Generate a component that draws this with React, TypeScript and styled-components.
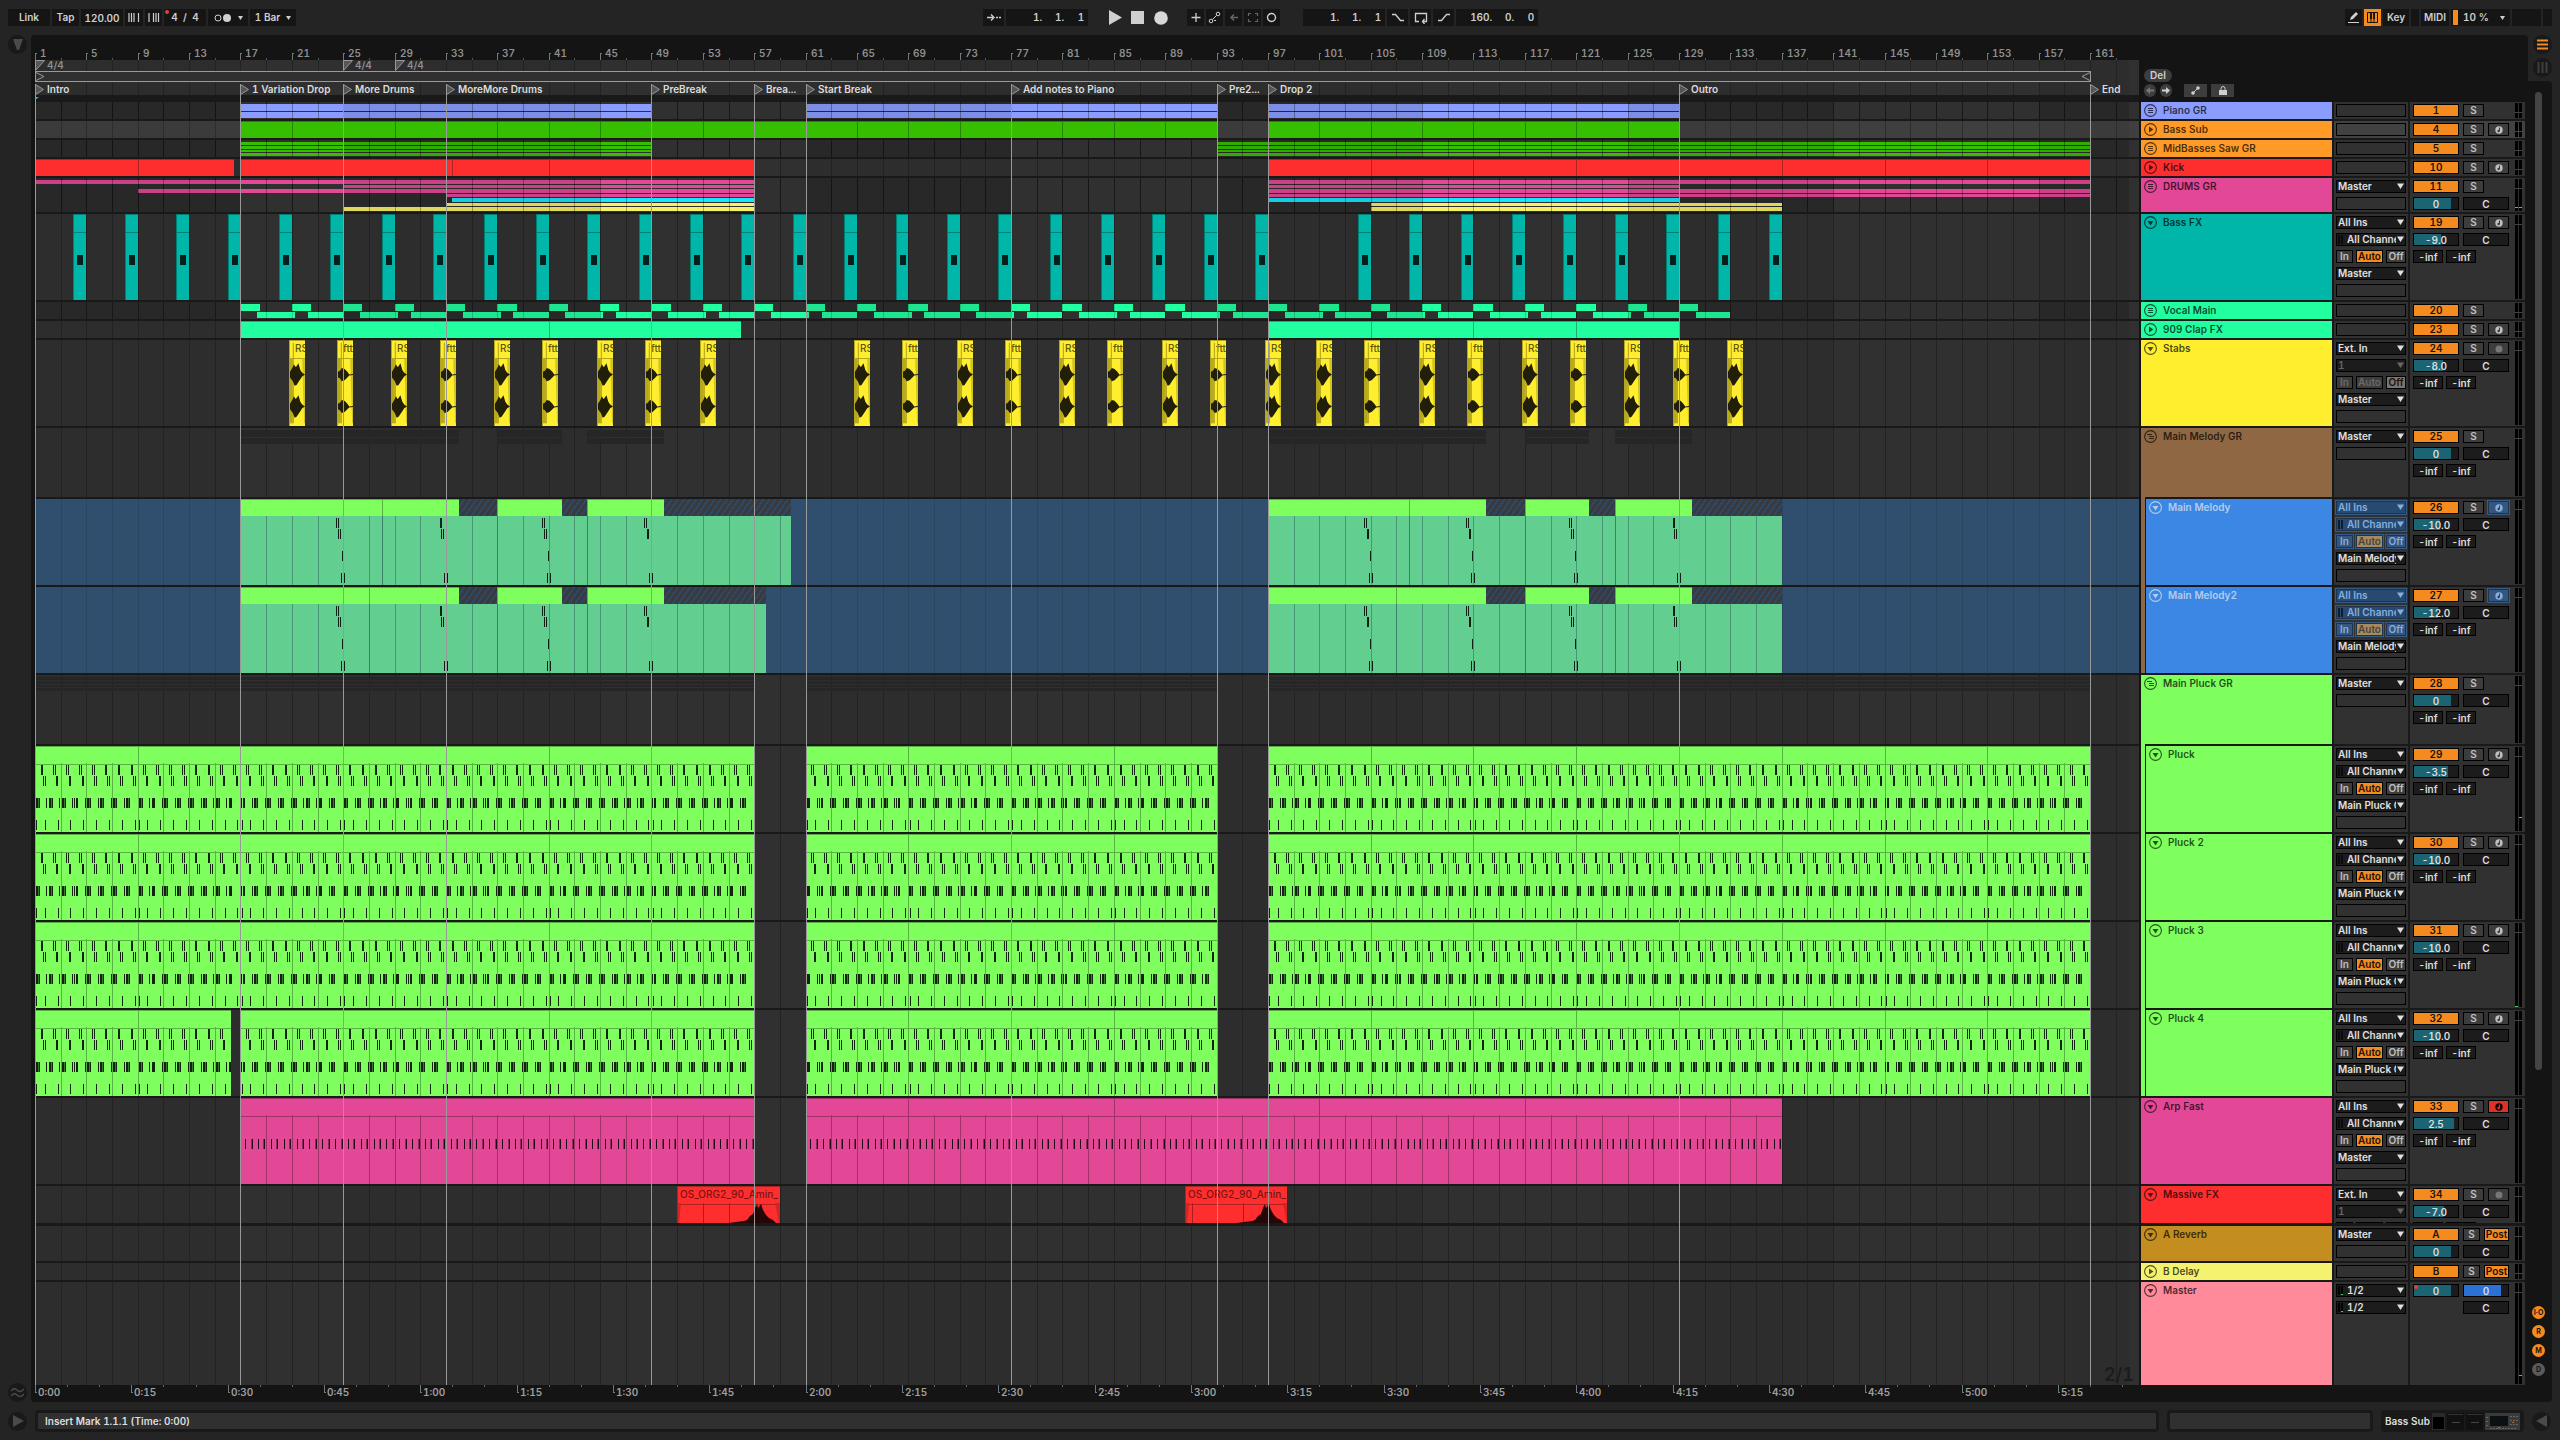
import React, { createContext, useContext, useLayoutEffect, useRef, useState } from "react";
import styled, { createGlobalStyle, css } from "styled-components";

/* ---------- theme values ---------- */
const C = {
  app: "#242424",
  panel: "#141414",
  gap: "#191919",
  field: "#151515",
  lane: "#303030",
  laneAlt: "#2d2d2d",
  text: "#cfcfcf",
  dim: "#8f8f8f",
  orange: "#f58a1f",
  teal: "#1a6473",
  green: "#7eff5e",
  pink: "#e24896",
  aqua: "#22ffa0",
};
const FONT = `Inter, "Liberation Sans", sans-serif`;

const Global = createGlobalStyle`
  * { box-sizing: border-box; }
  body {
    margin: 0;
    background: ${C.app};
    color: ${C.text};
    font: 600 10px/13px ${FONT};
    font-variant-numeric: tabular-nums;
  }
  button, input, select { font: inherit; font-variant-numeric: inherit; color: inherit; margin: 0; padding: 0; border: 0; border-radius: 0; outline: 0; }
  svg { display: block; }
`;

/* ---------- time scale ---------- */
const BARS = 163.81;
const Scale = createContext(12.844);
const useX = () => {
  const px = useContext(Scale);
  return (bar: number) => Math.floor((bar - 1) * px + 0.45);
};
const range = (from: number, to: number, step: number) => {
  const out: number[] = [];
  for (let b = from; b < to; b += step) out.push(b);
  return out;
};
type Span = [number, number];
const chop = (from: number, to: number, step: number): Span[] =>
  range(from, to, step).map((b) => [b, Math.min(b + step, to)]);

const DARK_BANDS: Span[] = [[1, 17], [25, 45], [61, 77], [93, 109], [125, 141], [157, 164]];

/* ---------- frame ---------- */
const App_ = styled.div`
  min-height: 100vh;
  display: flex;
  flex-direction: column;
  background: ${C.app};
`;
const Toolbar = styled.header`
  height: 35px;
  padding: 0 8px;
  display: flex;
  align-items: center;
`;
const ToolGroup = styled.div<{ $gap?: number; $before?: number }>`
  display: flex;
  align-items: center;
  gap: ${(p) => p.$gap ?? 2}px;
  margin-left: ${(p) => p.$before ?? 0}px;
`;
const Spacer = styled.div<{ $grow: number }>`
  flex: ${(p) => p.$grow} 0 0;
`;
const Tool = styled.button<{ $w: number; $on?: boolean; $off?: boolean }>`
  width: ${(p) => p.$w}px;
  height: 17px;
  display: flex;
  align-items: center;
  justify-content: center;
  gap: 6px;
  background: ${(p) => (p.$on ? C.orange : C.field)};
  color: ${(p) => (p.$off ? "#666" : p.$on ? "#151515" : C.text)};
  position: relative;
  white-space: pre;
`;
const RedDot = styled.i`
  position: absolute;
  left: 1px;
  top: 1px;
  width: 4px;
  height: 4px;
  border-radius: 50%;
  background: #e0402f;
`;
const TempoField = styled.input`
  width: 42px;
  height: 17px;
  background: ${C.field};
  text-align: center;
`;
const PositionBox = styled.div`
  width: 82px;
  height: 17px;
  padding-right: 4px;
  display: flex;
  justify-content: flex-end;
  background: ${C.field};
  input { width: 22px; background: none; text-align: right; }
  input:first-child { width: 30px; }
  input:last-child { width: 20px; }
`;
const Transport = styled.button`
  width: 23px;
  height: 17px;
  background: none;
  display: grid;
  place-items: center;
`;
const CpuBox = styled.label`
  height: 17px;
  width: 59px;
  display: flex;
  align-items: center;
  justify-content: space-between;
  padding: 1px 5px 1px 2px;
  background: ${C.field};
  i { width: 5px; height: 15px; background: ${C.orange}; }
  select { appearance: none; background: none; width: 32px; }
`;
const Body = styled.main`
  flex: 1;
  display: flex;
  padding-right: 8px;
`;
const LeftRail = styled.div`
  width: 31px;
  padding: 0 4px 0 8px;
  display: flex;
  flex-direction: column;
  justify-content: space-between;
`;
const Round = styled.button`
  width: 19px;
  height: 19px;
  flex: none;
  border-radius: 50%;
  background: #191919;
  display: grid;
  place-items: center;
`;
const Panel = styled.section`
  flex: 1;
  min-width: 0;
  display: flex;
  gap: 2px;
  padding: 0 3px 0 4px;
  background: ${C.panel};
  border-radius: 4px 4px 0 4px;
`;
const RightRail = styled.div`
  width: 24px;
  display: flex;
  flex-direction: column;
`;
const ViewSwitch = styled.div`
  height: 46px;
  padding-left: 5px;
  display: flex;
  flex-direction: column;
  gap: 4px;
`;
const ScrollColumn = styled.div`
  flex: 1;
  padding: 11px 3px 26px 0;
  background: ${C.panel};
  border-radius: 0 4px 4px 0;
  display: flex;
  flex-direction: column;
  align-items: center;
  gap: 6px;
`;
const ScrollTrack = styled.div`
  flex: 1;
  width: 7px;
`;
const ScrollThumb = styled.div`
  height: 81%;
  border-radius: 4px;
  background: #444;
`;
const Badge = styled.button<{ $off?: boolean }>`
  width: 13px;
  height: 13px;
  border-radius: 50%;
  background: ${(p) => (p.$off ? "#5a5a5a" : C.orange)};
  color: #151515;
  font-size: 7px;
  line-height: 13px;
  font-weight: 700;
  text-align: center;
`;

/* ---------- timeline ---------- */
const Timeline = styled.div`
  flex: 1;
  min-width: 0;
  position: relative;
  display: flex;
  flex-direction: column;
  overflow: hidden;
`;
const Strip = styled.div<{ $h: number; $bg?: string }>`
  height: ${(p) => p.$h}px;
  flex: none;
  position: relative;
  background: ${(p) => p.$bg ?? "transparent"};
`;
const Lanes = styled.div`
  flex: 1;
  display: flex;
  flex-direction: column;
  gap: 2px;
  background: ${C.gap};
`;
const LaneBox = styled.div<{ $h: number; $grow?: boolean; $space?: boolean; $tone?: string }>`
  position: relative;
  overflow: hidden;
  flex: ${(p) => (p.$grow ? 1 : 0)} 0 ${(p) => p.$h}px;
  margin-top: ${(p) => (p.$space ? 1 : 0)}px;
  background: ${(p) => (p.$tone === "selected" ? "#304e6e" : p.$tone === "focus" ? "#3f3f3f" : C.lane)};
`;
const Layer = styled.svg`
  position: absolute;
  inset: 0;
  width: 100%;
  height: 100%;
  pointer-events: none;
`;
const Block = styled.div<{ $color: string; $top: number; $h: number; $edge?: boolean }>`
  position: absolute;
  top: ${(p) => p.$top}px;
  height: ${(p) => p.$h}px;
  background: ${(p) => p.$color};
  overflow: hidden;
  ${(p) =>
    p.$edge &&
    css`
      border-left: 1px solid rgba(0, 0, 0, 0.3);
      &::before {
        content: "";
        position: absolute;
        inset: 0 0 auto 0;
        height: 17px;
        border-top: 1px solid rgba(0, 0, 0, 0.3);
        border-bottom: 1px solid rgba(0, 0, 0, 0.3);
      }
    `}
`;
const Hatch = styled.div`
  position: absolute;
  top: 0;
  height: 17px;
  background: repeating-linear-gradient(125deg, #3a3a3e 0 3px, #2e4763 3px 5px);
`;
const ClipName = styled.span<{ $inset: number; $color: string }>`
  position: absolute;
  left: ${(p) => p.$inset}px;
  top: 2px;
  color: ${(p) => p.$color};
  font-weight: 500;
  white-space: nowrap;
`;
const Mark = styled.span<{ $inset: number; $top: number; $color?: string }>`
  position: absolute;
  top: ${(p) => p.$top}px;
  padding-left: ${(p) => p.$inset}px;
  line-height: 13px;
  color: ${(p) => p.$color ?? C.dim};
  white-space: nowrap;
`;
const Flag = styled.svg`
  position: absolute;
`;
const CueLine = styled.i`
  position: absolute;
  top: 49px;
  bottom: 17px;
  width: 1px;
  background: #999;
`;
const LoopBrace = styled.div`
  position: absolute;
  top: 0;
  height: 11px;
  display: flex;
  justify-content: space-between;
  align-items: center;
  border: 1px solid #9a9a9a;
  background: #303030;
`;
const StartFlag = styled.i<{ $h: number }>`
  position: absolute;
  left: 0;
  top: 2px;
  border-top: 3px solid #31b9d6;
  border-right: ${(p) => p.$h}px solid transparent;
`;
const InsertLine = styled.i`
  position: absolute;
  left: 0;
  top: 0;
  bottom: 0;
  width: 1px;
  background: #31b9d6;
  z-index: 2;
`;
const GridSize = styled.span`
  position: absolute;
  right: 5px;
  bottom: 0;
  font-size: 18px;
  line-height: 20px;
  color: #1b1b1b;
`;

/* Vertical bar lines and the alternating shading of the arrangement. */
function Grid({ over, line, shade }: { over?: boolean; line?: string; shade?: string }) {
  const x = useX();
  return (
    <Layer shapeRendering="crispEdges">
      {DARK_BANDS.map(([a, b]) => (
        <rect key={a} x={x(a)} y={0} width={x(b) - x(a)} height="100%" fill={shade ?? (over ? "rgba(0,0,0,.1)" : C.laneAlt)} />
      ))}
      {range(3, 164, 2).map((b) => (
        <rect key={b} x={x(b)} y={0} width={1} height="100%" fill={line ?? (over ? "rgba(0,0,0,.3)" : "#222")} />
      ))}
    </Layer>
  );
}

function Blocks({ spans, color, top = 0, h, edge }: { spans: Span[]; color: string; top?: number; h: number; edge?: boolean }) {
  const x = useX();
  return (
    <>
      {spans.map(([a, b]) => (
        <Block key={a} $color={color} $top={top} $h={h} $edge={edge} style={{ left: x(a), width: x(b) - x(a) }} />
      ))}
    </>
  );
}

function BodyLines({ spans, h, color }: { spans: Span[]; h: number; color: string }) {
  const x = useX();
  return (
    <Layer shapeRendering="crispEdges">
      <path
        fill={color}
        d={spans.map(([a, b]) => range(a % 2 ? a + 2 : a + 1, b, 2).map((n) => `M${x(n)} 17h1v${h - 17}h-1z`).join("")).join("")}
      />
    </Layer>
  );
}

/* Thin overview strips shown in a folded group. */
const SUB2: Span[] = [[2, 7], [10, 6]];
const SUB4: Span[] = [[2, 3], [6, 3], [10, 2], [13, 3]];
function Overview({ rows, spans, color }: { rows: Span[]; spans: Span[]; color: string }) {
  return (
    <>
      {rows.map(([top, h]) => (
        <Blocks key={top} spans={spans} color={color} top={top} h={h} />
      ))}
    </>
  );
}

function DrumsLane() {
  const y = "#f7f06a";
  const rows: [number, number, string, Span[]][] = [
    [2, 4, C.pink, [[1, 57], [97, 161]]],
    [7, 3, C.pink, [[25, 57], [97, 129]]],
    [11, 4, C.pink, [[9, 57], [97, 161]]],
    [16, 3, C.pink, [[33, 57], [97, 161]]],
    [20, 4, "#18e6fb", [[33.5, 57], [97, 129]]],
    [25, 3, y, [[33, 57], [105, 137]]],
    [29, 4, y, [[25, 57], [105, 137]]],
  ];
  return (
    <>
      {rows.map(([top, h, c, spans]) => (
        <Blocks key={top} top={top} h={h} color={c} spans={spans} />
      ))}
      <Grid over />
    </>
  );
}

function BassFxLane() {
  const x = useX();
  const bars = range(4, 137, 4).filter((b) => b !== 100);
  return (
    <>
      <Blocks spans={bars.map((b) => [b, b + 1] as Span)} color="#00b6a8" h={86} edge />
      <Layer shapeRendering="crispEdges">
        {bars.map((b) => (
          <rect key={b} x={x(b) + 4} y={41} width={6} height={10} fill="#061f1d" />
        ))}
      </Layer>
    </>
  );
}

function VocalLane() {
  const top = range(17, 131, 4).map((b) => [b, b + 1.5] as Span);
  const low = range(17, 131, 8).flatMap((b) => [[b + 1.3, b + 4.25], [b + 5.25, b + 8]] as Span[]).filter(([a]) => a < 131);
  const end = 133;
  return (
    <>
      <Blocks spans={top} color={C.aqua} top={2} h={7} />
      <Blocks spans={low.map(([a, b]) => [a, Math.min(b, end)] as Span)} color={C.aqua} top={10} h={6} />
      <Grid over line="rgba(0,0,0,.18)" />
    </>
  );
}

const RS = [20.75, 28.75, 36.75, 44.75, 52.75, 64.75, 72.75, 80.75, 88.75, 96.75, 100.75, 108.75, 116.75, 124.75, 132.75];
const FT = [24.5, 32.5, 40.5, 48.5, 68.5, 76.5, 84.5, 92.5, 104.5, 112.5, 120.5, 128.5];
const WAVE_RS = "M0 -3L3 -8L4 -11L6 -8L7 -9L9 -12L11 -5L13 -2L16 0L13 2L11 5L9 8L7 11L5 12L3 7L0 3Z";
const WAVE_FT = "M0 -3L2 -4L4 -7L7 -6L10 -3L12 0L16 -.5V.5L12 1L10 3L7 6L4 7L2 4L0 3Z";
function StabsLane() {
  const x = useX();
  const items = [...RS.map((b) => ({ b, n: "RS", w: WAVE_RS })), ...FT.map((b) => ({ b, n: "ftt", w: WAVE_FT }))];
  return (
    <>
      {items.map(({ b, n, w }) => (
        <Block key={b} $color="#ffee2e" $top={0} $h={86} $edge style={{ left: x(b), width: 16 }}>
          <ClipName $inset={5} $color="#5f5708">{n}</ClipName>
          <Layer viewBox="0 0 16 86">
            <path d="M0 17h3v69h-3z" fill="#b9a91a" />
            <path d="M13 17h3v69h-1z" fill="#d2c322" />
            <path d="M3 0h1v86h-1z" fill="#a89a18" />
            <path d={w} transform="translate(0 34)" fill="#211f0a" />
            <path d={w} transform="translate(0 68)" fill="#211f0a" />
          </Layer>
        </Block>
      ))}
    </>
  );
}

function MelodyLane({ split, end }: { split: number; end: number }) {
  const x = useX();
  const parts: { from: number; to: number }[] = [{ from: 17, to: end }, { from: 97, to: 137 }];
  const body = "#62cf90";
  const place = (a: number, b: number) => ({ left: x(a), width: x(b) - x(a) });
  const group = (c: number, i: number) => {
    const g = x(c);
    const thick = c === 33 || c === 129;
    const r = (dx: number, y: number, w = 1) => `M${g + dx} ${y}h${w}v10h${-w}z`;
    return (
      (thick ? r(-6, 19, 2) : r(-7, 19) + r(-5, 19)) +
      (c === 49 || c === 105 || c === 113 ? r(-4, 30, 2) : r(-5, 30) + r(-3, 30)) +
      (i === 0 || i === 2 || c === 113 ? r(-1, 52) : "") +
      r(-2, 74) + r(1, 74)
    );
  };
  return (
    <>
      {parts.map(({ from, to }) => {
        const s = from - 17;
        return (
          <React.Fragment key={from}>
            <Hatch style={place(from, to)} />
            <Block $color={body} $top={17} $h={69} style={place(from, to)} />
            <BodyLines spans={[[from, to]]} h={86} color="#479676" />
            <Layer shapeRendering="crispEdges">
              <path fill="#3c8266" d={[split, 37, 44].map((b) => `M${x(b + s)} 17h1v69h-1z`).join("")} />
              <path fill="#0e2016" d={[25, 33, 41, 49].map((c, i) => group(c + s, i)).join("")} />
            </Layer>
            <Blocks
              spans={([[17, split], [split, 34], [37, 42], [44, 50]] as Span[]).map(([a, b]) => [a + s, b + s] as Span)}
              color={C.green}
              h={17}
              edge
            />
          </React.Fragment>
        );
      })}
    </>
  );
}

/* Repeating pluck riff: four pitch rows, one cell per bar. */
function PluckLane({ cut }: { cut?: boolean }) {
  const x = useX();
  const px = useContext(Scale);
  const spans: Span[] = [...(cut ? ([[1, 16.26], [17, 57]] as Span[]) : ([[1, 57]] as Span[])), [61, 93], [97, 161]];
  const clips = spans.flatMap(([a, b]) => chop(a, b, 8));
  let dark = "";
  let mid = "";
  clips.forEach(([a, b]) => {
    const limit = x(b);
    range(a, b, 1).forEach((bar) => {
      const s = (bar - 1) * px + 0.33;
      const note = (f: number, y: number, w = 1) => {
        const n = Math.floor(s + f);
        return n + w <= limit && n >= 0 ? `M${n} ${y}h${w}v10h${-w}z` : "";
      };
      dark += note(px * 0.45, 19) + note(px * 0.575, 19) + note(px * 0.64, 30) + note(px * 0.765, 30);
      dark += (bar === a ? note(1.3, 74) : note(-1.2, 52)) + note(1.1, 52) + note(2.2, 52) + note(4, 52) + note(px * 0.77, 74);
      mid += note(3.1, 52);
    });
  });
  return (
    <>
      <Blocks spans={clips} color={C.green} h={86} edge />
      <BodyLines spans={spans} h={86} color="#58b442" />
      <Layer shapeRendering="crispEdges">
        <path d={mid} fill="#3b7a2c" />
        <path d={dark} fill="#12240d" />
      </Layer>
    </>
  );
}

function ArpLane() {
  const x = useX();
  const spans: Span[] = [[17, 57], [61, 137]];
  const clips: Span[] = [[17, 33], [33, 57], [61, 69], ...chop(69, 133, 16), [133, 137]];
  const notes = spans.flatMap(([a, b]) => range(a + 0.37, b, 0.5));
  return (
    <>
      <Blocks spans={clips} color={C.pink} h={86} edge />
      <BodyLines spans={spans} h={86} color="#a03369" />
      <Layer shapeRendering="crispEdges">
        <path fill="#8a2c5b" d={notes.filter((_, i) => i % 2).map((b) => `M${x(b) - 1} 41h1v10h-1z`).join("")} />
        <path fill="#230a17" d={notes.map((b) => `M${x(b)} 41h1v10h-1z`).join("")} />
      </Layer>
    </>
  );
}

function MassiveLane() {
  const x = useX();
  return (
    <>
      {[51, 90.5].map((b) => (
        <Block key={b} $color="#ff2e2e" $top={0} $h={37} $edge style={{ left: x(b), width: x(b + 8) - x(b) }}>
          <ClipName $inset={2} $color="#7a1212">OS_ORG2_90_Amin_</ClipName>
          <Layer>
            <path d="M0 17h3l-2 20h-1z M97 17h6v20h-2z" fill="#cf2626" />
            <path d={b === 51 ? "M25 17h1v20h-1z M51 17h1v20h-1z" : "M6 17h1v20h-1z M57 17h1v20h-1z"} fill="#a81e1e" />
            <path d="M51 37L58 36L66 35L69 34L72 30L75 28L77 22L79 18L80 22L83 18L85 24L88 29L91 32L95 34L98 37Z" fill="#260707" />
          </Layer>
        </Block>
      ))}
    </>
  );
}

/* ---------- track model ---------- */
type Track = {
  name: string;
  num: string;
  h: number;
  color: string;
  icon: "group" | "open" | "play" | "fold";
  kids?: string;
  io?: "all" | "ext" | "out" | "master" | "none";
  out?: string;
  vol?: [string, number];
  rec?: "midi" | "audio" | "armed";
  inf?: boolean;
  sel?: boolean;
  focus?: boolean;
  ret?: boolean;
  meter?: [number, number];
  lane?: React.ReactNode;
};

const FULL: Span[] = [[1, 57], [61, 93], [97, 161]];
const GHOST: Span[] = [[17, 34], [37, 42], [44, 50], [97, 114], [117, 122], [124, 130]];
const BROWN = "#8f6843";

const tracks: Track[] = [
  { name: "Piano GR", num: "1", h: 17, color: "#8a9dff", icon: "group",
    lane: <><Overview rows={SUB2} spans={[[17, 49], [61, 93], [97, 129]]} color="#8a9dff" /><Grid over /></> },
  { name: "Bass Sub", num: "4", h: 17, color: "#ff9a26", icon: "play", rec: "midi", focus: true,
    lane: <><InsertLine /><Blocks spans={[...chop(17, 93, 4), ...chop(97, 129, 4)]} color="#36bf00" h={17} edge /></> },
  { name: "MidBasses Saw GR", num: "5", h: 17, color: "#ff9a26", icon: "group",
    lane: <><Overview rows={SUB4} spans={[[17, 49], [93, 161]]} color="#36bf00" /><Grid over /></> },
  { name: "Kick", num: "10", h: 17, color: "#ff2e2e", icon: "play", rec: "midi",
    lane: <Blocks spans={[[1, 9], [9, 16.5], [17, 25], [25, 33.5], [33.5, 41], [41, 49], [49, 57], ...chop(97, 161, 8)]} color="#ff2e2e" h={17} edge /> },
  { name: "DRUMS GR", num: "11", h: 34, color: C.pink, icon: "group", io: "out", out: "Master", vol: ["0", 84], meter: [28, 28], lane: <DrumsLane /> },
  { name: "Bass FX", num: "19", h: 86, color: "#00b6a8", icon: "open", io: "all", out: "Master", vol: ["-9.0", 61], rec: "midi", inf: true, lane: <BassFxLane /> },
  { name: "Vocal Main", num: "20", h: 17, color: C.aqua, icon: "group", lane: <VocalLane /> },
  { name: "909 Clap FX", num: "23", h: 17, color: C.aqua, icon: "play", rec: "midi",
    lane: <Blocks spans={[...chop(17, 56, 8), ...chop(97, 129, 8)]} color={C.aqua} h={17} edge /> },
  { name: "Stabs", num: "24", h: 86, color: "#ffee2e", icon: "open", io: "ext", out: "Master", vol: ["-8.0", 66], rec: "audio", inf: true, lane: <StabsLane /> },
  { name: "Main Melody GR", num: "25", h: 69, color: BROWN, icon: "fold", io: "out", out: "Master", vol: ["0", 84], inf: true,
    lane: <Overview rows={SUB2} spans={GHOST} color="#262626" /> },
  { name: "Main Melody", num: "26", h: 86, color: "#3c87e4", icon: "open", kids: BROWN, io: "all", out: "Main Melody GR", vol: ["-10.0", 59], rec: "midi", inf: true, sel: true,
    lane: <MelodyLane split={28} end={59.9} /> },
  { name: "Main Melody2", num: "27", h: 86, color: "#3c87e4", icon: "open", kids: BROWN, io: "all", out: "Main Melody GR", vol: ["-12.0", 55], rec: "midi", inf: true, sel: true,
    lane: <MelodyLane split={27} end={57.9} /> },
  { name: "Main Pluck GR", num: "28", h: 69, color: C.green, icon: "fold", io: "out", out: "Master", vol: ["0", 84], inf: true,
    lane: <Overview rows={SUB4} spans={FULL} color="#262626" /> },
  ...["Pluck", "Pluck 2", "Pluck 3", "Pluck 4"].map((name, i): Track => ({
    name, num: String(29 + i), h: 86, color: C.green, icon: "open", kids: C.green, io: "all", out: "Main Pluck GR",
    vol: i ? ["-10.0", 59] : ["-3.5", 77], rec: "midi", inf: true,
    meter: i === 0 ? [0, 70] : i === 2 ? [83, 0] : undefined,
    lane: <PluckLane cut={i === 3} />,
  })),
  { name: "Arp Fast", num: "33", h: 86, color: C.pink, icon: "open", io: "all", out: "Master", vol: ["2.5", 91], rec: "armed", inf: true, lane: <ArpLane /> },
  { name: "Massive FX", num: "34", h: 37, color: "#ff2e2e", icon: "open", io: "ext", out: "Master", vol: ["-7.0", 68], rec: "audio", inf: true, lane: <MassiveLane /> },
  { name: "A Reverb", num: "A", h: 35, color: "#c48d20", icon: "open", io: "out", out: "Master", vol: ["0", 84], ret: true },
  { name: "B Delay", num: "B", h: 17, color: "#f5f270", icon: "play", ret: true },
  { name: "Master", num: "", h: 103, color: "#ff8a9a", icon: "open", io: "master", meter: [0, 92] },
];

/* ---------- rulers ---------- */
const CUES: [number, string][] = [
  [1, "Intro"], [17, "1 Variation Drop"], [25, "More Drums"], [33, "MoreMore Drums"], [49, "PreBreak"], [57, "Brea..."],
  [61, "Start Break"], [77, "Add notes to Piano"], [93, "Pre2..."], [97, "Drop 2"], [129, "Outro"], [161, "End"],
];

function BeatRuler() {
  const x = useX();
  return (
    <Strip $h={25}>
      <Layer shapeRendering="crispEdges">
        <path fill="#777" d={range(1, 162, 4).map((b) => `M${x(b)} 18h2v1h-1v6h-1z`).join("")} />
        <path fill="#555" d={range(3, 164, 4).map((b) => `M${x(b)} 23h1v2h-1z`).join("")} />
      </Layer>
      {range(1, 162, 4).map((b) => (
        <Mark key={b} $inset={5} $top={12} style={{ left: x(b) }}>{b}</Mark>
      ))}
    </Strip>
  );
}

function SignatureRow() {
  const x = useX();
  return (
    <Strip $h={11} $bg={C.lane}>
      <Grid />
      {[1, 25, 29].map((b) => (
        <React.Fragment key={b}>
          <Flag width="11" height="11" style={{ left: x(b), top: 0 }}>
            <path d="M.5 .5H9.500L.5 10.500Z" fill="#555" stroke="#999" />
          </Flag>
          <Mark $inset={12} $top={-1} style={{ left: x(b) }}>4/4</Mark>
        </React.Fragment>
      ))}
    </Strip>
  );
}

function LoopRow() {
  const x = useX();
  return (
    <Strip $h={11} $bg={C.lane}>
      <Grid />
      <LoopBrace style={{ left: x(1), width: x(161) - x(1) + 1 }}>
        <svg width="9" height="9"><path d="M0 .5L8 4.500L0 8.500" fill="none" stroke="#9a9a9a" /></svg>
        <svg width="9" height="9"><path d="M9 .5L1 4.500L9 8.500" fill="none" stroke="#9a9a9a" /></svg>
      </LoopBrace>
    </Strip>
  );
}

function CueRow() {
  const x = useX();
  return (
    <Strip $h={13} $bg={C.lane}>
      <Grid />
      {CUES.map(([b, name]) => (
        <React.Fragment key={b}>
          <Flag width="10" height="11" style={{ left: x(b), top: 2 }}>
            <path d="M.5 .5L8.500 5.500L.5 10.500Z" fill="#555" stroke="#999" />
          </Flag>
          <Mark $inset={12} $top={1} $color="#dcdcdc" style={{ left: x(b) }}>{name}</Mark>
        </React.Fragment>
      ))}
    </Strip>
  );
}

function TimeRuler() {
  const x = useX();
  const marks = range(0, 22, 1).map((i) => ({ bar: 1 + i * 7.5, label: `${Math.floor(i / 4)}:${String((i % 4) * 15).padStart(2, "0")}` }));
  return (
    <Strip $h={17} $bg={C.panel}>
      <Layer shapeRendering="crispEdges">
        <path fill="#777" d={marks.map((m) => `M${x(m.bar)} 0h1v7h1v1h-2z`).join("")} />
        <path fill="#666" d={marks.flatMap((m) => [2.5, 5].map((o) => `M${x(m.bar + o)} 0h1v2h-1z`)).join("")} />
      </Layer>
      {marks.map((m) => (
        <Mark key={m.label} $inset={3} $top={1} $color="#a0a0a0" style={{ left: x(m.bar) }}>{m.label}</Mark>
      ))}
    </Strip>
  );
}

function Cues() {
  const x = useX();
  return <>{CUES.map(([b]) => <CueLine key={b} style={{ left: x(b) }} />)}</>;
}

/* ---------- mixer side ---------- */
const Side = styled.aside`
  width: 384px;
  display: flex;
  flex-direction: column;
`;
const SideTop = styled.div`
  height: 67px;
  padding: 34px 0 5px 3px;
  display: flex;
  flex-direction: column;
  gap: 2px;
`;
const SideButtons = styled.div`
  display: flex;
  gap: 4px;
`;
const Pill = styled.button<{ $w: number; $square?: boolean; $gap?: number }>`
  width: ${(p) => p.$w}px;
  height: 13px;
  margin-left: ${(p) => p.$gap ?? 0}px;
  border-radius: ${(p) => (p.$square ? 0 : 7)}px;
  background: #3d3d3d;
  display: grid;
  place-items: center;
`;
const Rows = styled.div`
  flex: 1;
  display: flex;
  flex-direction: column;
  gap: 2px;
  background: ${C.gap};
`;
const Row = styled.div<{ $h: number; $grow?: boolean; $space?: boolean }>`
  display: flex;
  gap: 2px;
  flex: ${(p) => (p.$grow ? 1 : 0)} 0 ${(p) => p.$h}px;
  height: ${(p) => p.$h}px;
  margin-top: ${(p) => (p.$space ? 1 : 0)}px;
`;
const HeadCell = styled.div`
  width: 191px;
  display: flex;
  gap: 1px;
`;
const GroupStrip = styled.div<{ $color: string }>`
  width: 4px;
  margin-top: -2px;
  background: ${(p) => p.$color};
`;
const Head = styled.div<{ $color: string; $sel?: boolean }>`
  flex: 1;
  display: flex;
  align-items: flex-start;
  gap: 6px;
  padding: 2px 3px;
  background: ${(p) => p.$color};
  color: ${(p) => (p.$sel ? "#b4cdec" : "rgba(0,0,0,.72)")};
  button { background: none; width: 13px; height: 13px; }
`;
const IoCell = styled.div<{ $focus?: boolean }>`
  width: 74px;
  overflow: hidden;
  display: flex;
  flex-direction: column;
  gap: 4px;
  padding: 2px;
  background: ${(p) => (p.$focus ? "#414141" : "#313131")};
`;
const MixCell = styled(IoCell)`
  width: 115px;
  flex-direction: row;
  justify-content: space-between;
  padding: 1px 3px;
`;
const MixControls = styled.div`
  display: flex;
  flex-direction: column;
  gap: 4px;
  padding-top: 1px;
`;
const Line = styled.div<{ $gap?: number; $end?: boolean }>`
  display: flex;
  flex: none;
  gap: ${(p) => p.$gap ?? 4}px;
  justify-content: ${(p) => (p.$end ? "flex-end" : "flex-start")};
`;
const boxed = css`
  height: 13px;
  flex: none;
  border: 1px solid #000;
  line-height: 11px;
  text-align: center;
`;
const selectedTone = css`
  background: #284a70;
  color: #86aede;
  border-color: #1c3450;
  box-shadow: 0 0 0 1px #355a84;
`;
const SelectWrap = styled.label<{ $off?: boolean; $sel?: boolean; $inset?: boolean }>`
  ${boxed}
  display: block;
  width: 70px;
  position: relative;
  background: #1c1c1c;
  color: ${(p) => (p.$off ? "#666" : "#e0e0e0")};
  ${(p) => p.$sel && selectedTone}
  select {
    appearance: none;
    display: block;
    width: 100%;
    height: 11px;
    padding: 0 9px 0 ${(p) => (p.$inset ? 10 : 1)}px;
    background: none;
    line-height: 11px;
    overflow: hidden;
    opacity: 1;
  }
  svg { position: absolute; right: 1px; top: 2px; pointer-events: none; }
`;
const MiniMeter = styled.i<{ $lit?: boolean }>`
  position: absolute;
  left: 1px;
  top: 1px;
  width: 5px;
  height: 9px;
  border-left: 2px solid #000;
  border-right: 2px solid #000;
  opacity: ${(p) => (p.$lit ? 1 : 0.6)};
  &::after {
    content: "";
    position: absolute;
    right: -2px;
    bottom: 0;
    width: 2px;
    height: 1px;
    background: ${(p) => (p.$lit ? "#2be04a" : "#000")};
  }
`;
const EmptyBox = styled.div`
  ${boxed}
  width: 70px;
`;
const Toggle = styled.button<{ $w: number; $on?: boolean; $off?: boolean; $sel?: boolean; $grey?: boolean }>`
  ${boxed}
  width: ${(p) => p.$w}px;
  background: ${(p) => (p.$on ? C.orange : p.$grey ? "#777" : "#3d3d3d")};
  color: ${(p) => (p.$on || p.$grey ? "#1a1208" : p.$off ? "#6a6a6a" : "#c0c0c0")};
  display: flex;
  align-items: center;
  justify-content: center;
  white-space: nowrap;
  ${(p) => p.$sel && selectedTone}
  ${(p) => p.$sel && p.$on && css`background: #a38a63; color: #4c4433;`}
  ${(p) => p.$sel && !p.$on && css`background: #35577f;`}
`;
const Arm = styled(Toggle)<{ $armed?: boolean }>`
  ${(p) => p.$armed && css`background: #e03127;`}
`;
const Value = styled.input<{ $w: number; $fill?: number; $blue?: boolean }>`
  && {
    ${boxed}
    width: ${(p) => p.$w}px;
    color: #dcdcdc;
    background: linear-gradient(to right, ${(p) => (p.$blue ? "#2a72d6" : C.teal)} ${(p) => p.$fill ?? 0}%, #1c1c1c ${(p) => p.$fill ?? 0}%);
  }
`;
const VolumeSlot = styled.div`
  position: relative;
  display: flex;
`;
const Meters = styled.div`
  display: flex;
  gap: 1px;
  position: relative;
  &::after {
    content: "";
    position: absolute;
    left: 0;
    right: 0;
    top: 9px;
    height: 1px;
    background: #444;
  }
`;
const Meter = styled.div<{ $at?: number }>`
  width: 3px;
  background: #000;
  ${(p) => !!p.$at && css`
    background: linear-gradient(#000 ${p.$at}px, #2be04a ${p.$at}px ${p.$at! + 1}px, #000 ${p.$at! + 1}px);
  `}
`;

function HeadIcon({ kind, light }: { kind: Track["icon"]; light?: boolean }) {
  const c = light ? "#b4cdec" : "rgba(0,0,0,.68)";
  return (
    <svg width="13" height="13" viewBox="0 0 13 13" fill="none" stroke={c}>
      <circle cx="6.5" cy="6.5" r="5.900" strokeWidth="1.100" />
      {kind === "group" && <path d="M4 4.500h5M4 6.500h5M4 8.500h5" />}
      {kind === "fold" && <path d="M3 4.500h5M5 6.500h5M5 8.500h5" />}
      {kind === "play" && <path d="M5 3.500L9.500 6.500L5 9.500Z" fill={c} stroke="none" />}
      {kind === "open" && <path d="M3.500 5H9.500L6.500 9.500Z" fill={c} stroke="none" />}
    </svg>
  );
}

function Pick({ label, value, off, sel, meter, lit }: { label: string; value: string; off?: boolean; sel?: boolean; meter?: boolean; lit?: boolean }) {
  return (
    <SelectWrap $off={off} $sel={sel} $inset={meter}>
      {meter && <MiniMeter $lit={lit} />}
      <select aria-label={label} defaultValue={value} disabled={off}>
        <option>{value}</option>
      </select>
      <svg width="7" height="6"><path d="M0 .5H7L3.500 6Z" fill="currentColor" /></svg>
    </SelectWrap>
  );
}

function Io({ t }: { t: Track }) {
  const who = t.name;
  if (t.io === "master")
    return (
      <IoCell>
        <Pick label="Cue out" value="1/2" meter lit />
        <Pick label="Master out" value="1/2" meter lit />
      </IoCell>
    );
  const ext = t.io === "ext";
  return (
    <IoCell $focus={t.focus}>
      {(ext || t.io === "all") && (
        <>
          <Pick label={`${who} input`} value={ext ? "Ext. In" : "All Ins"} sel={t.sel} />
          <Pick label={`${who} channel`} value={ext ? "1" : "All Channels"} off={ext} sel={t.sel} meter={!ext} />
          <Line $gap={3}>
            <Toggle $w={17} $off={ext} $sel={t.sel}>In</Toggle>
            <Toggle $w={27} $on={!ext} $off={ext} $sel={t.sel}>Auto</Toggle>
            <Toggle $w={20} $grey={ext} $sel={t.sel}>Off</Toggle>
          </Line>
        </>
      )}
      {t.out && <Pick label={`${who} output`} value={t.out} />}
      <EmptyBox />
    </IoCell>
  );
}

function ArmIcon({ kind }: { kind: Track["rec"] }) {
  if (kind === "audio") return <svg width="8" height="8"><circle cx="4" cy="4" r="3.500" fill="#777" /></svg>;
  const hole = kind === "armed" ? "#e03127" : "#3d3d3d";
  return (
    <svg width="8" height="8" viewBox="0 0 8 8">
      <circle cx="4" cy="4" r="3.700" fill={kind === "armed" ? "#1a0505" : "currentColor"} />
      <path d="M4.500 1.500V5" stroke={hole} fill="none" />
      <circle cx="3.600" cy="5" r="1.200" fill={hole} />
    </svg>
  );
}

function Mix({ t }: { t: Track }) {
  return (
    <MixCell $focus={t.focus}>
      <MixControls>
        {t.io === "master" ? (
          <>
            <Line>
              <VolumeSlot>
                <Value aria-label="Master volume" readOnly $w={46} $fill={84} value="0" />
                <RedDot />
              </VolumeSlot>
              <Value aria-label="Cue volume" readOnly $w={46} $fill={84} $blue value="0" />
            </Line>
            <Line $end>
              <Value aria-label="Master pan" readOnly $w={46} value="C" />
            </Line>
          </>
        ) : (
          <Line>
            <Toggle $w={46} $on>{t.num}</Toggle>
            <Toggle $w={t.ret ? 17 : 21}>S</Toggle>
            {t.ret && <Toggle $w={25} $on>Post</Toggle>}
            {t.rec && (
              <Arm $w={21} $sel={t.sel} $armed={t.rec === "armed"} aria-label={`Arm ${t.name}`}>
                <ArmIcon kind={t.rec} />
              </Arm>
            )}
          </Line>
        )}
        {t.vol && (
          <Line>
            <Value aria-label={`${t.name} volume`} readOnly $w={46} $fill={t.vol[1]} value={t.vol[0]} />
            <Value aria-label={`${t.name} pan`} readOnly $w={46} value="C" />
          </Line>
        )}
        {t.inf && (
          <Line $gap={3}>
            <Value aria-label={`${t.name} send A`} readOnly $w={30} value="-inf" />
            <Value aria-label={`${t.name} send B`} readOnly $w={30} value="-inf" />
          </Line>
        )}
      </MixControls>
      <Meters>
        <Meter $at={t.meter?.[0]} />
        <Meter $at={t.meter?.[1]} />
      </Meters>
    </MixCell>
  );
}

/* ---------- status bar ---------- */
const Status = styled.footer`
  height: 22px;
  margin: 8px 0;
  padding: 0 9px 0 8px;
  display: flex;
  gap: 8px;
  align-items: center;
`;
const StatusText = styled.div`
  flex: 1;
  height: 22px;
  border: 3px solid #191919;
  border-radius: 4px;
  background: #303030;
  padding: 0 7px;
  line-height: 16px;
  color: #dedede;
`;
const StatusBox = styled(StatusText)`
  flex: 0 0 206px;
`;
const DeviceBox = styled.div`
  width: 143px;
  height: 22px;
  border-radius: 4px;
  background: #191919;
  display: flex;
  align-items: center;
  justify-content: space-between;
  padding: 0 4px;
  color: #dedede;
  white-space: nowrap;
`;

function Arrow({ d, w = 10, h = 10, fill = "#4a4a4a" }: { d: string; w?: number; h?: number; fill?: string }) {
  return <svg width={w} height={h} viewBox={`0 0 ${w} ${h}`}><path d={d} fill={fill} /></svg>;
}
function Glyph({ d, w = 14, sw = 1 }: { d: string; w?: number; sw?: number }) {
  return <svg width={w} height="13" viewBox={`0 0 ${w} 13`} fill="none" stroke="currentColor" strokeWidth={sw}><path d={d} /></svg>;
}
function Position({ label, v }: { label: string; v: string[] }) {
  return (
    <PositionBox role="group" aria-label={label}>
      {v.map((n, i) => <input key={i} aria-label={`${label} ${i + 1}`} readOnly value={n} />)}
    </PositionBox>
  );
}

function TopBar() {
  return (
    <Toolbar>
      <ToolGroup>
        <Tool $w={42}>Link</Tool>
        <Tool $w={27}>Tap</Tool>
        <TempoField aria-label="Tempo" readOnly value="120.00" />
        <Tool $w={18} aria-label="Nudge down"><Glyph w={12} d="M1 2v9M3.500 2v9M6 2v9M10.500 2v9" sw={1.2} /></Tool>
        <Tool $w={17} aria-label="Nudge up"><Glyph w={12} d="M1 2v9M5.500 2v9M8 2v9M10.500 2v9" sw={1.2} /></Tool>
        <Tool $w={42}><RedDot />{"4  /  4"}</Tool>
        <Tool $w={40} aria-label="Metronome">
          <svg width="18" height="8"><circle cx="4" cy="4" r="3" fill="none" stroke="#cfcfcf" /><circle cx="13" cy="4" r="4" fill="#cfcfcf" /></svg>
          <Arrow w={5} h={4} d="M0 0H5L2.500 4Z" fill="#cfcfcf" />
        </Tool>
        <Tool $w={46}>1 Bar<Arrow w={5} h={4} d="M0 0H5L2.500 4Z" fill="#cfcfcf" /></Tool>
      </ToolGroup>
      <Spacer $grow={46} />
      <ToolGroup $gap={15}>
        <ToolGroup>
          <Tool $w={21} aria-label="Follow"><Glyph w={16} d="M1 6.500h6M5 3.500L8 6.500L5 9.500M10 6.500h2M13 6.500h2" sw={1.4} /></Tool>
          <Position label="Position" v={["1.", "1.", "1"]} />
        </ToolGroup>
        <ToolGroup $gap={0}>
          <Transport aria-label="Play"><Arrow w={14} h={15} d="M1 0L14 7.500L1 15Z" fill="#cfcfcf" /></Transport>
          <Transport aria-label="Stop"><Arrow w={13} h={13} d="M0 0H13V13H0Z" fill="#cfcfcf" /></Transport>
          <Transport aria-label="Record"><svg width="14" height="14"><circle cx="7" cy="7" r="6.800" fill="#d8d8d8" /></svg></Transport>
        </ToolGroup>
        <ToolGroup>
          <Tool $w={17} aria-label="Overdub"><Glyph d="M7 2v9M2.500 6.500h9" sw={1.3} /></Tool>
          <Tool $w={17} aria-label="Automation arm"><svg width="13" height="13" fill="none" stroke="#cfcfcf"><circle cx="10" cy="3" r="1.800" /><circle cx="3" cy="10" r="1.800" /><path d="M4.500 8.500L8.500 4.500M6 9.500h2" /></svg></Tool>
          <Tool $w={17} $off aria-label="Re-enable automation"><Glyph d="M11 6.500H4M7 3.500L4 6.500L7 9.500" sw={1.5} /></Tool>
          <Tool $w={17} $off aria-label="Capture"><Glyph d="M2.500 5V2.500H5M9 2.500h2.500V5M11.500 8v2.500H9M5 10.500H2.500V8" sw={1.2} /></Tool>
          <Tool $w={17} aria-label="Session record"><svg width="11" height="11"><circle cx="5.5" cy="5.5" r="4" fill="none" stroke="#cfcfcf" strokeWidth="1.400" /></svg></Tool>
        </ToolGroup>
        <ToolGroup $before={8}>
          <Position label="Loop start" v={["1.", "1.", "1"]} />
          <Tool $w={21} aria-label="Punch in"><Glyph d="M1 3.500H4.500L9.500 9.500H13" sw={1.3} /></Tool>
          <Tool $w={21} aria-label="Loop"><Glyph d="M5 10.500H1.500V2.500H12.500V10.500H9M10.500 8L8.500 10.500L10.500 13" sw={1.3} /></Tool>
          <Tool $w={21} aria-label="Punch out"><Glyph d="M1 9.500H4.500L9.500 3.500H13" sw={1.3} /></Tool>
          <Position label="Loop length" v={["160.", "0.", "0"]} />
        </ToolGroup>
      </ToolGroup>
      <Spacer $grow={54} />
      <ToolGroup>
        <Tool $w={17} aria-label="Draw mode"><svg width="13" height="13"><path d="M3 9L4 6L9 1L11 3L6 8Z" fill="#cfcfcf" /><path d="M1 11.500h11" stroke="#cfcfcf" /></svg></Tool>
        <Tool $w={17} $on aria-label="Computer keyboard"><svg width="11" height="11"><path d="M.5 .5h10v10h-10zM4 6v5M7 6v5" fill="none" stroke="#151515" /><path d="M3 0h2v7h-2zM6 0h2v7h-2z" fill="#151515" /></svg></Tool>
        <Tool $w={26}>Key</Tool>
        <Tool $w={8} aria-label="Key in" />
        <Tool $w={28}>MIDI</Tool>
        <CpuBox>
          <i />
          <select aria-label="CPU load" defaultValue="10 %"><option>10 %</option></select>
          <Arrow w={5} h={4} d="M0 0H5L2.500 4Z" fill="#cfcfcf" />
        </CpuBox>
        <Tool $w={29} aria-label="Disk overload" />
        <Tool $w={9} aria-label="MIDI in" />
      </ToolGroup>
    </Toolbar>
  );
}

export default function App() {
  const ref = useRef<HTMLDivElement>(null);
  const [px, setPx] = useState(12.844);
  useLayoutEffect(() => {
    const el = ref.current;
    if (!el) return;
    const measure = () => setPx(el.clientWidth / BARS);
    measure();
    const ro = new ResizeObserver(measure);
    ro.observe(el);
    return () => ro.disconnect();
  }, []);

  return (
    <Scale.Provider value={px}>
      <Global />
      <App_>
        <TopBar />
        <Body>
          <LeftRail>
            <Round aria-label="Show browser"><Arrow w={10} h={11} d="M0 0H10L6 11H4Z" /></Round>
            <Round aria-label="Show groove pool">
              <svg width="13" height="9" fill="none" stroke="#4a4a4a" strokeWidth="1.500"><path d="M0 3C3-1 5 1 6.500 2.500S10 4 13 1M0 8C3 4 5 6 6.500 7.500S10 9 13 6" /></svg>
            </Round>
          </LeftRail>
          <Panel>
            <Timeline ref={ref}>
              <BeatRuler />
              <SignatureRow />
              <LoopRow />
              <CueRow />
              <Strip $h={7} $bg={C.gap}><StartFlag $h={4} /></Strip>
              <Lanes>
                {tracks.map((t) => {
                  const grow = t.name === "Master";
                  return (
                    <LaneBox key={t.name} $h={t.h} $grow={grow} $space={t.name === "A Reverb"} $tone={t.sel ? "selected" : t.focus ? "focus" : undefined}>
                      {t.sel ? <Grid line="#2a4562" shade="#304e6e" /> : t.focus ? <Grid line="#2c2c2c" shade="#3b3b3b" /> : <Grid />}
                      {t.lane}
                      {grow && <GridSize>2/1</GridSize>}
                    </LaneBox>
                  );
                })}
              </Lanes>
              <TimeRuler />
              <Cues />
            </Timeline>
            <Side>
              <SideTop>
                <SideButtons><Pill $w={28}>Del</Pill></SideButtons>
                <SideButtons>
                  <Pill $w={12} aria-label="Previous locator"><Arrow w={8} h={7} d="M0 3.500L4 0V2.500H8V4.500H4V7Z" fill="#777" /></Pill>
                  <Pill $w={12} aria-label="Next locator"><Arrow w={8} h={7} d="M8 3.500L4 0V2.500H0V4.500H4V7Z" fill="#cfcfcf" /></Pill>
                  <Pill $w={23} $square $gap={8} aria-label="Automation mode"><svg width="9" height="9"><circle cx="7" cy="2" r="1.800" fill="#cfcfcf" /><circle cx="2" cy="7" r="1.800" fill="#cfcfcf" /><path d="M2 7L7 2" stroke="#cfcfcf" /></svg></Pill>
                  <Pill $w={23} $square aria-label="Lock envelopes"><svg width="8" height="9"><path d="M0 4h8v5h-8z" fill="#cfcfcf" /><path d="M2 4V2.500a2 2 0 0 1 4 0V4" fill="none" stroke="#cfcfcf" /></svg></Pill>
                </SideButtons>
              </SideTop>
              <Rows>
                {tracks.map((t) => (
                  <Row key={t.name} $h={t.h} $grow={t.name === "Master"} $space={t.name === "A Reverb"}>
                    <HeadCell>
                      {t.kids && <GroupStrip $color={t.kids} />}
                      <Head $color={t.color} $sel={t.sel}>
                        <button aria-label={`Unfold ${t.name}`}><HeadIcon kind={t.icon} light={t.sel} /></button>
                        <span>{t.name}</span>
                      </Head>
                    </HeadCell>
                    <Io t={t} />
                    <Mix t={t} />
                  </Row>
                ))}
              </Rows>
              <Strip $h={17} />
            </Side>
          </Panel>
          <RightRail>
            <ViewSwitch>
              <Round aria-label="Arrangement view"><svg width="11" height="11"><path d="M0 1.500h11M0 5.500h11M0 9.500h11" stroke={C.orange} strokeWidth="2" /></svg></Round>
              <Round aria-label="Session view"><svg width="11" height="11"><path d="M1.500 0v11M5.500 0v11M9.500 0v11" stroke="#3f3f3f" strokeWidth="2" /></svg></Round>
            </ViewSwitch>
            <ScrollColumn>
              <ScrollTrack><ScrollThumb /></ScrollTrack>
              <Badge>I·O</Badge>
              <Badge>R</Badge>
              <Badge>M</Badge>
              <Badge $off>D</Badge>
            </ScrollColumn>
          </RightRail>
        </Body>
        <Status>
          <Round aria-label="Info view"><Arrow w={12} h={12} d="M1 0L12 6L1 12Z" /></Round>
          <StatusText role="status">Insert Mark 1.1.1 (Time: 0:00)</StatusText>
          <StatusBox />
          <DeviceBox>
            Bass Sub
            <svg width="88" height="17" shapeRendering="crispEdges">
              <path d="M0 0h13v17h-13z" fill="#2a2a2a" /><path d="M1 4h11v12h-11z" fill="#000" />
              <path d="M15 0h17v17h-17zM34 0h17v17h-17z" fill="#111" />
              <path d="M16 1h15M35 1h15" stroke="#333" /><path d="M20 9h8M39 9h8" stroke="#444" />
              <path d="M53 0h35v17h-35z" fill="#3a3a3a" /><path d="M58 3h18v10h-18z" fill="#0b1012" />
              <path d="M54 4h3M54 8h3M54 12h3M78 3h8M78 7h8M78 11h8M58 15h26" stroke="#666" strokeDasharray="2 1" />
              <path d="M66 14h2M80 9h2" stroke="#a5642c" />
            </svg>
          </DeviceBox>
          <Round aria-label="Device view"><Arrow w={12} h={12} d="M11 0L0 6L11 12Z" /></Round>
        </Status>
      </App_>
    </Scale.Provider>
  );
}
